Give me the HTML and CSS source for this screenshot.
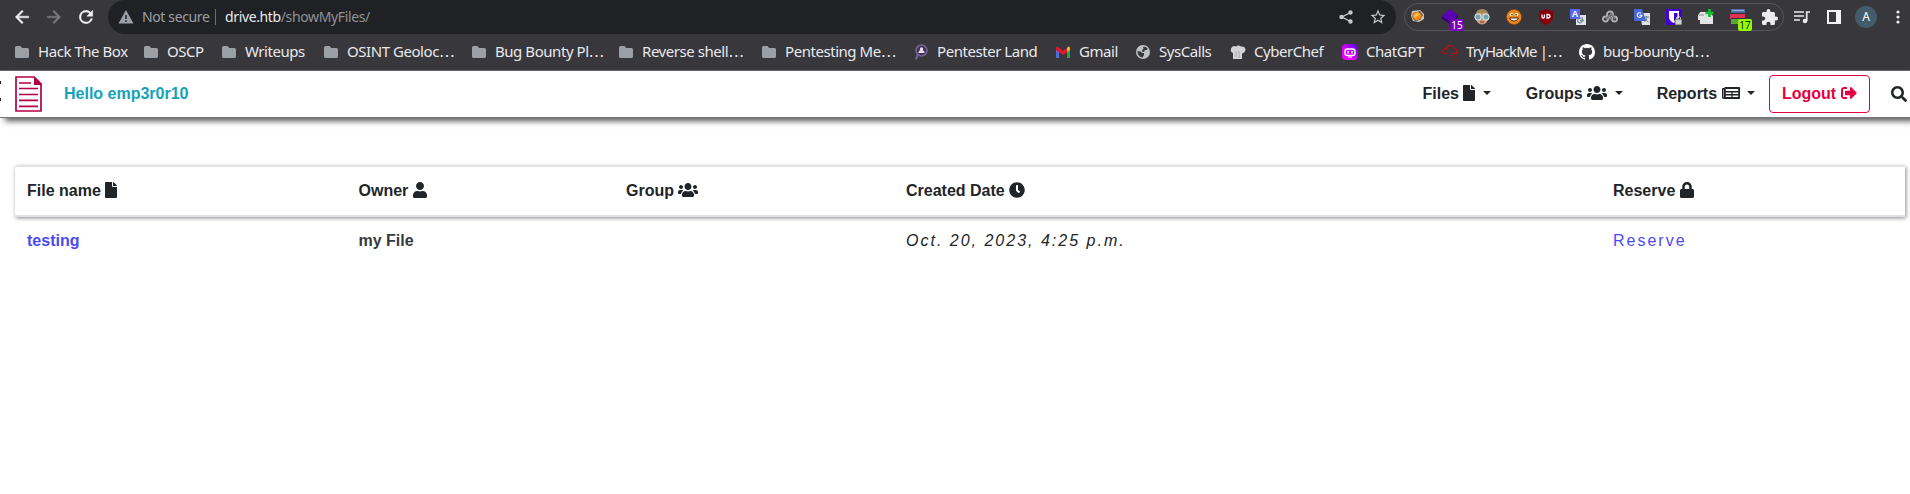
FILE: index.html
```html
<!DOCTYPE html>
<html lang="en">
<head>
<meta charset="utf-8">
<title>My files</title>
<link rel="stylesheet" href="styles.css">
</head>
<body>
<svg class="defs" width="0" height="0">
  <symbol id="folder" viewBox="0 0 16 16"><path fill="#9aa0a6" d="M2.500 2h4l1.700 2h5.300A1.500 1.500 0 0 1 15 5.500v7a1.500 1.500 0 0 1-1.500 1.500h-11A1.500 1.500 0 0 1 1 12.500v-9A1.500 1.500 0 0 1 2.500 2z"/></symbol>
  <symbol id="file" viewBox="0 0 384 512"><path d="M224 136V0H24C10.700 0 0 10.700 0 24v464c0 13.300 10.700 24 24 24h336c13.300 0 24-10.700 24-24V160H248c-13.200 0-24-10.800-24-24zm160-14.100v6.100H256V0h6.100c6.400 0 12.500 2.500 17 7l97.900 98c4.500 4.500 7 10.600 7 16.900z"/></symbol>
  <symbol id="users" viewBox="0 0 640 512"><path d="M96 224c35.300 0 64-28.700 64-64s-28.700-64-64-64-64 28.700-64 64 28.700 64 64 64zm448 0c35.300 0 64-28.700 64-64s-28.700-64-64-64-64 28.700-64 64 28.700 64 64 64zm32 32h-64c-17.600 0-33.500 7.100-45.100 18.600 40.300 22.100 68.900 62 75.100 109.400h66c17.700 0 32-14.300 32-32v-32c0-35.300-28.700-64-64-64zm-256 0c61.900 0 112-50.100 112-112S381.900 32 320 32 208 82.100 208 144s50.100 112 112 112zm76.800 32h-8.300c-20.800 10-43.900 16-68.500 16s-47.600-6-68.500-16h-8.300C179.600 288 128 339.600 128 403.200V432c0 26.500 21.500 48 48 48h288c26.500 0 48-21.500 48-48v-28.800c0-63.600-51.600-115.200-115.200-115.200zm-223.700-13.400C161.500 263.100 145.600 256 128 256H64c-35.300 0-64 28.700-64 64v32c0 17.700 14.300 32 32 32h65.900c6.300-47.400 34.900-87.300 75.200-109.400z"/></symbol>
</svg>

<header class="browser">
  <div class="toolbar">
    <div class="navigation">
      <svg width="20" height="20" viewBox="0 0 24 24" fill="#f1f1f3"><path stroke="#f1f1f3" stroke-width=".6" d="M20 11H7.830l5.590-5.590L12 4l-8 8 8 8 1.410-1.410L7.830 13H20v-2z"/></svg>
      <svg width="20" height="20" viewBox="0 0 24 24" fill="#7b7a7f"><path stroke="#7b7a7f" stroke-width=".5" d="M12 4l-1.410 1.410L16.170 11H4v2h12.170l-5.580 5.590L12 20l8-8z"/></svg>
      <svg width="20" height="20" viewBox="0 0 24 24" fill="#f1f1f3"><path d="M17.650 6.350A7.960 7.960 0 0 0 12 4a8 8 0 1 0 7.730 10h-2.080A6 6 0 1 1 12 6c1.660 0 3.140.69 4.220 1.780L13 11h7V4l-2.350 2.350z" stroke="#f1f1f3" stroke-width=".6"/></svg>
    </div>
    <div class="address">
      <svg width="16" height="14" viewBox="0 0 16 14"><path fill="#9aa0a6" d="M8 0l7.500 13.500H.5z"/><path fill="#202124" d="M7.200 5h1.600v4H7.200zM7.200 10.200h1.600v1.600H7.200z"/></svg>
      <span class="insecure">Not secure</span>
      <span class="divider"></span>
      <span class="url"><b>drive.htb</b>/showMyFiles/</span>
      <svg class="share" width="16" height="16" viewBox="0 0 16 16" stroke="#c7c8ca" fill="#c7c8ca" stroke-width="1.400"><path d="M12.500 3.500L4 8l8.500 4.500" fill="none"/><circle cx="12.500" cy="3.500" r="1.500"/><circle cx="3.500" cy="8" r="1.500"/><circle cx="12.500" cy="12.500" r="1.500"/></svg>
      <svg class="star" width="18" height="18" viewBox="0 0 24 24" fill="#c7c8ca"><path d="M22 9.240l-7.190-.62L12 2 9.190 8.630 2 9.240l5.460 4.730L5.820 21 12 17.270 18.180 21l-1.630-7.030L22 9.240zM12 15.400l-3.760 2.270 1-4.280-3.320-2.880 4.380-.38L12 6.100l1.710 4.040 4.380.38-3.320 2.880 1 4.280L12 15.400z"/></svg>
    </div>
    <div class="extensions">
      <svg viewBox="0 0 16 16"><path fill="#c9c2b5" d="M2 2l8-1 4 4v5l-5 3-6-1-2-5z"/><path fill="#6b5a45" d="M3 4l7-2 3 4-3 5-5 1-3-4z"/><ellipse cx="7" cy="7" rx="4.500" ry="4" fill="#ee8b12"/><path d="M3.500 7l4-3.500 2 2-4 3z" fill="#ffc36a"/></svg>
      <div class="ext"><svg viewBox="0 0 16 16"><path fill="#5b00b5" d="M0 7l8-7 8 6-7 7z"/><path fill="#35007a" d="M0 7l9 6 7-7v2l-7 7-9-5z"/></svg><span class="badge">15</span></div>
      <svg viewBox="0 0 16 16"><ellipse cx="8" cy="8" rx="6.500" ry="7.500" fill="#c99b7b"/><path fill="#a18756" d="M1.500 6Q2 0 8 0t6.500 6L11 4H5z"/><circle cx="4" cy="8" r="3.200" fill="#6ea4b4" stroke="#e3eeef"/><circle cx="12" cy="8" r="3.200" fill="#6ea4b4" stroke="#e3eeef"/><path d="M6 13h4" stroke="#7f3f32"/></svg>
      <svg viewBox="0 0 16 16"><circle cx="8" cy="8" r="7.500" fill="#e9871d" stroke="#8d460c" stroke-dasharray="2 1"/><ellipse cx="5.500" cy="5.500" rx="1.900" ry="1.600" fill="#fff2ce"/><ellipse cx="10.500" cy="5.500" rx="1.900" ry="1.600" fill="#fff2ce"/><circle cx="6" cy="5.700" r=".8" fill="#432006"/><circle cx="10" cy="5.700" r=".8" fill="#432006"/><path fill="#fff" stroke="#432006" stroke-width=".9" d="M3.500 9h9q-1 3-4.500 3T3.500 9z"/></svg>
      <svg viewBox="0 0 16 16"><path fill="#850009" d="M8 0q3 2 7 2v6q0 5-7 8-7-3-7-8V2q4 0 7-2z"/><path d="M4 5.500v2.300q0 1.200 1.200 1.200t1.200-1.200V5.500M9 5.500V9h1q2 0 2-1.700t-2-1.800z" fill="none" stroke="#fff" stroke-width="1.300"/></svg>
      <svg viewBox="0 0 16 16"><path fill="#dfe5e8" d="M6 6h10v10H6z"/><path d="M11 9.500a2.300 2.300 0 1 0 0 4q2-1.500 1-5.500m-2 3.500h4" fill="none" stroke="#78909c" stroke-width="1.300"/><path fill="#5867ef" d="M0 0h10v10H0z"/><text x="5" y="8" class="letter">A</text></svg>
      <svg viewBox="0 0 16 16" fill="none" stroke="#b0b0b0" stroke-width="1.900"><circle cx="3.500" cy="10" r="2.500"/><circle cx="8" cy="5.500" r="3"/><circle cx="12.500" cy="10" r="2.500"/><path d="M4 10l5-5 4 5M7 10l3-1" stroke="#777"/></svg>
      <svg viewBox="0 0 16 16"><path fill="#dfe1e5" d="M6 4h10v12H8z"/><path d="M10 8h5M12.500 7v2q0 3-2 4m0-4q2 3 4 4" stroke="#728087" fill="none"/><path fill="#4868d8" d="M0 0h8l4 12H0z"/><path d="M7 4.300a2.300 2.300 0 1 0 .8 2H5.500" stroke="#fff" stroke-width="1.100" fill="none"/></svg>
      <svg viewBox="0 0 16 16"><path fill="#4200d5" d="M0 0h16v16H0z"/><path fill="#fff" d="M3 2h10v6q0 4-5 6-5-2-5-6z"/><path fill="#4200d5" d="M8 4h3.500v4q0 2-3.500 4z"/><path fill="#d1d1d1" stroke="#28262c" stroke-width=".7" d="M9 10h7v6H9z"/><path d="M10.500 10V8.500q2-3 4 0V10" fill="none" stroke="#bbb"/></svg>
      <svg viewBox="0 0 16 16"><path fill="#e4e4e4" d="M1 5q1-3 4-2h6l4 4v8H2v-4H0V6z"/><path fill="#bbb" d="M1 5h5v2H1z"/><path stroke="#13bd34" stroke-width="2.700" d="M11.500 0v8M7.500 4h8"/></svg>
      <div class="ext"><svg viewBox="0 0 16 16"><path fill="#4d6ca5" d="M1 0h14v5H1z"/><path fill="#e13054" d="M0 5h15v5H0z"/><path fill="#64a339" d="M1 10h14v5H1z"/><path stroke="#303036" d="M1 4.500h14M1 9.500h14"/><path stroke="#9fb4d6" d="M2 1.500h12"/></svg><span class="badge lime">17</span></div>
      <svg viewBox="2 1 21 21" fill="#ececef"><path d="M20.500 11H19V7c0-1.100-.9-2-2-2h-4V3.500a2.500 2.500 0 0 0-5 0V5H4c-1.100 0-1.990.9-1.990 2v3.800H3.500a2.700 2.700 0 0 1 0 5.400H2V20c0 1.100.9 2 2 2h3.800v-1.500a2.700 2.700 0 0 1 5.400 0V22H17c1.100 0 2-.9 2-2v-4h1.500a2.500 2.500 0 0 0 0-5z"/></svg>
    </div>
    <div class="tools">
      <svg width="16" height="14" viewBox="0 0 16 14"><path fill="none" stroke="#ececef" stroke-width="1.700" d="M0 2h10M0 6h10M0 10h6M12.700 11V2H16"/><circle cx="11" cy="11" r="2.300" fill="#ececef"/></svg>
      <svg width="14" height="14" viewBox="0 0 14 14"><path fill="#f3f3f5" fill-rule="evenodd" d="M0 0h14v14H0zM2 2v10h7V2z"/></svg>
      <span class="avatar">A</span>
      <svg width="4" height="14" viewBox="0 0 4 14" fill="#ececef"><circle cx="2" cy="2" r="1.600"/><circle cx="2" cy="7" r="1.600"/><circle cx="2" cy="12" r="1.600"/></svg>
    </div>
  </div>
  <div class="bookmarks">
    <a><svg><use href="#folder"/></svg><span>Hack The Box</span></a>
    <a><svg><use href="#folder"/></svg><span>OSCP</span></a>
    <a><svg><use href="#folder"/></svg><span>Writeups</span></a>
    <a><svg><use href="#folder"/></svg><span>OSINT Geoloc<i>…</i></span></a>
    <a><svg><use href="#folder"/></svg><span>Bug Bounty Pl<i>…</i></span></a>
    <a><svg><use href="#folder"/></svg><span>Reverse shell<i>…</i></span></a>
    <a><svg><use href="#folder"/></svg><span>Pentesting Me<i>…</i></span></a>
    <a><svg viewBox="0 0 16 16"><circle cx="8.500" cy="6.500" r="5.500" fill="#3d3450" stroke="#77659b" stroke-width="1.500"/><path d="M5 10l-2 5.500" stroke="#77659b" stroke-width="2"/><circle cx="8.500" cy="5" r="1.700" fill="#ecdff0"/><path d="M5.500 9q0-3 3-3t3 3z" fill="#ecdff0"/></svg><span>Pentester Land</span></a>
    <a><svg viewBox="0 0 16 16"><path fill="#4d6fdd" d="M1 5l3 2v7H1z"/><path fill="#21a64a" d="M12 7l3-2v9h-3z"/><path fill="#f7bd17" d="M12 4l1.500-1.500Q15 2.500 15 4v2l-3 2z"/><path fill="#e9142a" d="M1 4Q1 2.500 2.500 2.500L8 7l4-3v4l-4 3-7-5z"/></svg><span>Gmail</span></a>
    <a><svg viewBox="0 0 16 16"><circle cx="8" cy="8" r="7" fill="#bfc1c5"/><path fill="#38373c" d="M2.600 7l3 .5 1.500 1.500H9v2l-1.500 2.500C4 13 2.200 10 2.600 7zM8 3c2-1 4 .5 4.600 1.500L12 6h-2L9 8 7 7.500V6l1.500-1z"/></svg><span>SysCalls</span></a>
    <a><svg viewBox="0 0 16 16"><path fill="#d3d3d3" d="M3 15V9Q0 8 1 4.500 3 1 6 2.500q2-2 5 0 4-.5 4.500 3Q15 9 12 9.500V15z"/><path d="M6 7v6M9 7v7" stroke="#aaa"/></svg><span>CyberChef</span></a>
    <a><svg viewBox="0 0 16 16"><defs><linearGradient id="chat" x1="0" x2="1" y1="1" y2="0"><stop stop-color="#f400ff"/><stop offset=".4" stop-color="#e000fc"/><stop offset="1" stop-color="#4d08d8"/></linearGradient></defs><rect width="16" height="16" rx="4" fill="url(#chat)"/><rect x="3" y="5" width="10" height="6.500" rx="2.500" fill="none" stroke="#fff" stroke-width="1.400"/><path d="M6 7v2.500M10 7v2.500" stroke="#fff" stroke-width="1.500"/><path d="M6 13h4" stroke="#fff"/></svg><span>ChatGPT</span></a>
    <a><svg viewBox="0 0 16 16" fill="none" stroke="#c20a10" stroke-width="1.200"><path d="M5 9.500H2.500Q0 8.500 1 6.500q1-2 3-1Q5 1 9 1.500q3 .5 3 3 3 0 3 2.500t-2 2.500H9"/><path d="M7 11.500h3m2 0h3M9 13.500h4M11 15.500h4" stroke="#762024"/></svg><span class="tight">TryHackMe |<i>…</i></span></a>
    <a><svg viewBox="0 0 16 16"><path fill="#fff" d="M8 0C3.580 0 0 3.580 0 8c0 3.540 2.290 6.530 5.470 7.590.4.070.55-.17.55-.38 0-.19-.01-.82-.01-1.490-2.010.37-2.530-.49-2.690-.94-.09-.23-.48-.94-.82-1.130-.28-.15-.68-.52-.01-.53.63-.01 1.080.58 1.230.82.72 1.210 1.870.87 2.330.66.070-.52.28-.87.51-1.070-1.780-.2-3.640-.89-3.640-3.950 0-.87.31-1.590.82-2.150-.08-.2-.36-1.020.08-2.120 0 0 .67-.21 2.200.82a7.600 7.600 0 0 1 4 0c1.530-1.040 2.200-.82 2.200-.82.44 1.100.16 1.920.08 2.120.51.56.82 1.270.82 2.150 0 3.070-1.870 3.750-3.650 3.950.29.25.54.73.54 1.480 0 1.070-.01 1.930-.01 2.200 0 .21.15.46.55.38A8.010 8.010 0 0 0 16 8c0-4.420-3.580-8-8-8z"/></svg><span>bug-bounty-d<i>…</i></span></a>
  </div>
</header>

<nav class="navbar">
  <span class="bullets"></span>
  <svg class="logo" width="27" height="36" viewBox="0 0 27 36"><path fill="#fff" stroke="#b50045" stroke-width="1.700" d="M1 1h18l7 7v27H1z"/><path fill="#b50045" d="M19 0l8 8v1h-8z"/><path stroke="#b50045" stroke-width="1.700" d="M4 7h12M4 12.500h19M4 18.500h19M4 24.300h19M4 30.300h19"/></svg>
  <span class="hello">Hello emp3r0r10</span>
  <a class="menu">Files <svg class="i-file"><use href="#file"/></svg> <i class="caret"></i></a>
  <a class="menu">Groups <svg class="i-users"><use href="#users"/></svg> <i class="caret"></i></a>
  <a class="menu">Reports <svg class="i-news" viewBox="0 0 576 512"><path fill-rule="evenodd" d="M552 64H112c-20.900 0-38.700 13.400-45.300 32H24c-13.300 0-24 10.700-24 24v272c0 30.900 25.100 56 56 56h496c13.300 0 24-10.700 24-24V88c0-13.300-10.700-24-24-24zM48 392V144h16v248c0 4.400-3.600 8-8 8s-8-3.600-8-8zm84-264h376c6.600 0 12 5.400 12 12v40c0 6.600-5.400 12-12 12H132c-6.600 0-12-5.400-12-12v-40c0-6.600 5.400-12 12-12zm-12 112h180v48H120zm220 0h180v48H340zM120 336h180v48H120zm220 0h180v48H340z"/></svg> <i class="caret"></i></a>
  <a class="logout">Logout <svg viewBox="0 0 512 512"><path d="M497 273L329 441c-15 15-41 4.500-41-17v-96H152c-13.300 0-24-10.700-24-24v-96c0-13.300 10.700-24 24-24h136V88c0-21.400 25.900-32 41-17l168 168c9.300 9.400 9.300 24.600 0 34zM192 436v-40c0-6.600-5.400-12-12-12H96c-17.700 0-32-14.300-32-32V160c0-17.700 14.300-32 32-32h84c6.600 0 12-5.400 12-12V76c0-6.600-5.400-12-12-12H96c-53 0-96 43-96 96v192c0 53 43 96 96 96h84c6.600 0 12-5.400 12-12z"/></svg></a>
  <svg class="search" viewBox="0 0 512 512"><path d="M505 442.700L405.300 343c-4.500-4.500-10.600-7-17-7H372c27.600-35.300 44-79.700 44-128C416 93.100 322.900 0 208 0S0 93.100 0 208s93.100 208 208 208c48.300 0 92.700-16.400 128-44v16.300c0 6.400 2.500 12.500 7 17l99.700 99.700c9.400 9.400 24.600 9.400 33.900 0l28.300-28.300c9.400-9.400 9.400-24.600.1-34zM208 336c-70.700 0-128-57.200-128-128 0-70.700 57.200-128 128-128 70.700 0 128 57.200 128 128 0 70.700-57.200 128-128 128z"/></svg>
</nav>

<main class="files">
  <div class="row head">
    <span>File name <svg class="i-file"><use href="#file"/></svg></span>
    <span>Owner <svg class="i-user" viewBox="0 0 448 512"><path d="M224 256c70.700 0 128-57.300 128-128S294.700 0 224 0 96 57.300 96 128s57.300 128 128 128zm89.600 32h-16.700c-22.200 10.200-46.900 16-72.900 16s-50.600-5.800-72.900-16h-16.700C60.200 288 0 348.200 0 422.400V464c0 26.500 21.500 48 48 48h352c26.500 0 48-21.500 48-48v-41.600c0-74.200-60.200-134.400-134.400-134.400z"/></svg></span>
    <span>Group <svg class="i-users"><use href="#users"/></svg></span>
    <span>Created Date <svg viewBox="0 0 512 512"><path d="M256 8C119 8 8 119 8 256s111 248 248 248 248-111 248-248S393 8 256 8zm92.500 313l-20 25a16 16 0 0 1-22.500 2.500l-67-49.700a40 40 0 0 1-15-31.300V112a16 16 0 0 1 16-16h32a16 16 0 0 1 16 16v144l58 42.500a16 16 0 0 1 2.500 22.500z"/></svg></span>
    <span>Reserve <svg class="i-user" viewBox="0 0 448 512"><path d="M400 224h-24v-72C376 68.200 307.800 0 224 0S72 68.200 72 152v72H48c-26.500 0-48 21.500-48 48v192c0 26.500 21.500 48 48 48h352c26.500 0 48-21.500 48-48V272c0-26.500-21.500-48-48-48zm-104 0H152v-72c0-39.700 32.300-72 72-72s72 32.300 72 72v72z"/></svg></span>
  </div>
  <div class="row">
    <a class="name">testing</a>
    <span class="owner">my File</span>
    <span></span>
    <span class="date">Oct. 20, 2023, 4:25 p.m.</span>
    <a class="reserve">Reserve</a>
  </div>
</main>
</body>
</html>
```

FILE: styles.css
```css
* { box-sizing: border-box; }
body { margin: 0; height: 494px; overflow: hidden; background: #fff; color: #212529; font: 16px/24px "Liberation Sans", Arial, sans-serif; }
.defs { position: absolute; }
svg { flex: none; }

.browser { height: 71px; background: #38373c; border-bottom: 1px solid #69666d; font-family: "Noto Sans", sans-serif; color: #e9e9ec; }
.toolbar { display: flex; height: 34px; align-items: center; }
.navigation { display: flex; width: 108px; padding-left: 12px; gap: 12px; }
.address { display: flex; align-items: center; width: 1288px; height: 34px; padding-left: 10px; border-radius: 17px; background: #202124; font-size: 14px; letter-spacing: -.37px; white-space: nowrap; }
.insecure { width: 67px; margin-left: 8px; color: #9aa0a6; }
.divider { width: 1px; height: 16px; margin: 0 9px 0 6px; background: #6d6f73; }
.url { color: #8e9196; }
.url b { font-weight: 400; color: #e8eaed; }
.share { margin-left: auto; }
.star { margin: 0 9px 0 15px; }
.extensions { display: flex; align-items: center; gap: 16px; width: 380px; height: 28px; margin-left: 8px; padding-left: 5px; border: 1px solid #55545b; border-radius: 14px; }
.extensions svg { display: block; width: 16px; height: 16px; }
.ext { position: relative; flex: none; }
.badge { position: absolute; left: 8px; top: 10px; width: 14px; height: 12px; border-radius: 2px; background: #7d00bd; color: #fff; font-size: 10px; line-height: 12px; text-align: center; }
.lime { background: #92fb00; color: #222; }
.letter { font: bold 9px "Liberation Sans", sans-serif; fill: #fff; text-anchor: middle; }
.tools { display: flex; align-items: center; margin-left: 10px; }
.tools svg:nth-child(2) { margin-left: 17px; }
.avatar { width: 22px; height: 22px; margin: 0 19px 0 14px; border-radius: 50%; background: #435c6c; color: #fff; font-size: 12px; line-height: 22px; text-align: center; }

.bookmarks { display: grid; grid-template-columns: 129px 78px 102px 148px 147px 143px 152px 142px 80px 95px 112px 100px 137px 200px; height: 36px; padding-left: 14px; align-items: center; font-size: 15px; letter-spacing: -.45px; white-space: nowrap; }
.bookmarks a { display: flex; align-items: center; gap: 8px; }
.bookmarks svg { width: 16px; height: 16px; }
.bookmarks span { height: 24px; line-height: 22px; }
.bookmarks .tight { letter-spacing: -.85px; }
.bookmarks i { font: 16px/16px "DejaVu Sans", sans-serif; }

.navbar { display: flex; align-items: center; height: 47px; border-bottom: 1px solid #777; box-shadow: 5px 3px 6px #555; font-weight: 700; }
.navbar svg, .head svg { fill: currentColor; }
.bullets { width: 1px; height: 20px; margin-top: -6px; border: solid #222; border-width: 3px 0; }
.logo { margin-left: 14px; }
.hello { margin-left: 22px; color: #17a2b8; }
.menu { margin-right: 34px; white-space: nowrap; }
.hello + .menu { margin-left: auto; margin-right: 35px; }
.menu svg, .logout svg, .head svg { width: 16px; height: 16px; vertical-align: -2px; }
.menu .i-file, .head .i-file { width: 12px; }
.menu .i-users, .head .i-users { width: 20px; }
.menu .i-news { width: 18px; }
.head .i-user { width: 14px; }
.caret { display: inline-block; margin-left: 3px; border: 4.500px solid transparent; border-top-color: currentColor; border-bottom: 0; vertical-align: 4px; }
.logout { width: 101px; height: 38px; margin-left: -20px; padding: 6px 12px; border: 1px solid #e6003f; border-radius: 4px; color: #e6003f; white-space: nowrap; }
.search { width: 16px; height: 16px; margin: 0 3px 0 21px; }

.files { margin: 48px 5px 0 15px; }
.row { display: grid; grid-template-columns: 331.500px 267.500px 280px 707px 304px; height: 48px; align-items: center; }
.row > * { padding-left: 12px; }
.head { height: 51px; border-top: 1px solid #dee2e6; border-bottom: 2px solid #dee2e6; box-shadow: 1px 1px 4px #888; font-weight: 700; }
.name { color: #4a4af4; font-weight: 700; }
.owner { color: #343a40; font-weight: 700; }
.date { font-style: italic; letter-spacing: 2px; }
.reserve { color: #4a4af4; letter-spacing: 2px; }
```
